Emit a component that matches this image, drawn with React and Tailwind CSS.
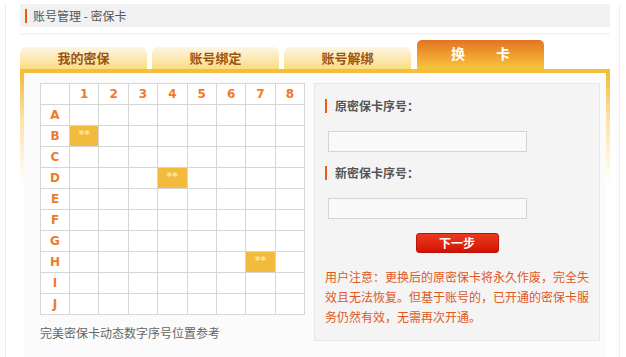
const COLS = ['1', '2', '3', '4', '5', '6', '7', '8']
const ROWS = ['A', 'B', 'C', 'D', 'E', 'F', 'G', 'H', 'I', 'J']
const MARKED = { 'B1': true, 'D4': true, 'H7': true }

const TABS = ['我的密保', '账号绑定', '账号解绑']

function Label({ children }) {
  return (
    <div className="flex items-center h-[16px]">
      <span className="w-[2px] h-[14px] bg-[#f05a14]" />
      <span className="ml-[8px] text-[12px] font-bold text-[#555]">{children}</span>
    </div>
  )
}

export default function App() {
  return (
    <div className="w-[626px] h-[357px] bg-white overflow-hidden pl-[5px]"
      style={{ fontFamily: '"Noto Sans CJK SC", "Noto Sans", sans-serif' }}>
      <div className="w-[615px] h-full border-x border-[#eeeeee] pl-[14px] pr-[9px]">

        {/* Titel */}
        <div className="mt-[4px] h-[23px] bg-[#f1f1f1] flex items-center">
          <span className="ml-[5px] w-[2px] h-[14px] bg-[#f05a14]" />
          <span className="ml-[6px] text-[12px] text-[#555]">账号管理 - 密保卡</span>
        </div>
        <div className="mt-[6px] h-[2px] bg-[#f5f5f5]" />

        {/* Tabs */}
        <div className="mt-[5px] h-[29px] flex items-end gap-[5px]">
          {TABS.map(t => (
            <div key={t}
              className="w-[127px] h-[22px] rounded-t-[6px] bg-gradient-to-b from-[#fdf5e4] to-[#fbdc80] flex items-center justify-center text-[13px] font-bold text-[#9c5510]">
              {t}
            </div>
          ))}
          <div className="ml-[1px] w-[127px] h-[29px] rounded-t-[5px] bg-gradient-to-b from-[#e47222] to-[#f5c63c] flex items-start justify-center gap-[31px] pt-[3px] text-[14px] font-bold text-white">
            <span>换</span><span>卡</span>
          </div>
        </div>

        {/* Inhalt */}
        <div className="h-[288px] px-[4px] pt-[4px] bg-[linear-gradient(to_bottom,#f4bd3c_0px,#f4bd3c_6px,#fbe3a8_50px,#ffffff_115px)]">
          <div className="h-full bg-[#fbfbfb] flex pl-[16px] pt-[10px]">

            <div className="w-[265px]">
              <table className="border-collapse table-fixed w-[265px]"
                style={{ fontFamily: '"DejaVu Sans", Verdana, sans-serif' }}>
                <tbody>
                  <tr className="h-[21px]">
                    <td className="w-[29px] border border-[#d6d6d6] bg-white" />
                    {COLS.map(c => (
                      <td key={c} className="border border-[#d6d6d6] bg-white text-center text-[12px] font-bold text-[#ee7a2a]">{c}</td>
                    ))}
                  </tr>
                  {ROWS.map(r => (
                    <tr key={r} className="h-[21px]">
                      <td className="border border-[#d6d6d6] bg-white text-center text-[12px] font-bold text-[#ee7a2a]">{r}</td>
                      {COLS.map(c => MARKED[r + c] ? (
                        <td key={c} className="border border-[#d6d6d6] bg-[#f2bb3d] text-center align-top pt-[4px] text-[11px] font-bold leading-[10px] text-[#fde6b4]">**</td>
                      ) : (
                        <td key={c} className="border border-[#d6d6d6] bg-white" />
                      ))}
                    </tr>
                  ))}
                </tbody>
              </table>
              <div className="mt-[9px] text-[12px] text-[#666]">完美密保卡动态数字序号位置参考</div>
            </div>

            <div className="ml-[9px] w-[286px] h-[258px] border border-[#e8e8e8] bg-[#f4f4f4] pl-[10px]">
              <div className="mt-[14px]"><Label>原密保卡序号：</Label></div>
              <div className="mt-[17px] ml-[3px] w-[199px] h-[21px] border border-[#d4d4d4] bg-[#f9f9f9]" />
              <div className="mt-[13px]"><Label>新密保卡序号：</Label></div>
              <div className="mt-[17px] ml-[3px] w-[199px] h-[21px] border border-[#d4d4d4] bg-[#f9f9f9]" />
              <div className="mt-[14px] flex justify-center pr-[10px]">
                <button className="w-[83px] h-[20px] rounded-[3px] border border-[#b81408] bg-gradient-to-b from-[#ec3a1e] to-[#d20f04] text-white text-[12px] font-bold leading-none">
                  下一步
                </button>
              </div>
              <p className="mt-[14px] w-[264px] text-[12px] leading-[20px] text-[#e0581c]">
                用户注意：更换后的原密保卡将永久作废，完全失效且无法恢复。但基于账号的，已开通的密保卡服务仍然有效，无需再次开通。
              </p>
            </div>
          </div>
        </div>
      </div>
    </div>
  )
}
